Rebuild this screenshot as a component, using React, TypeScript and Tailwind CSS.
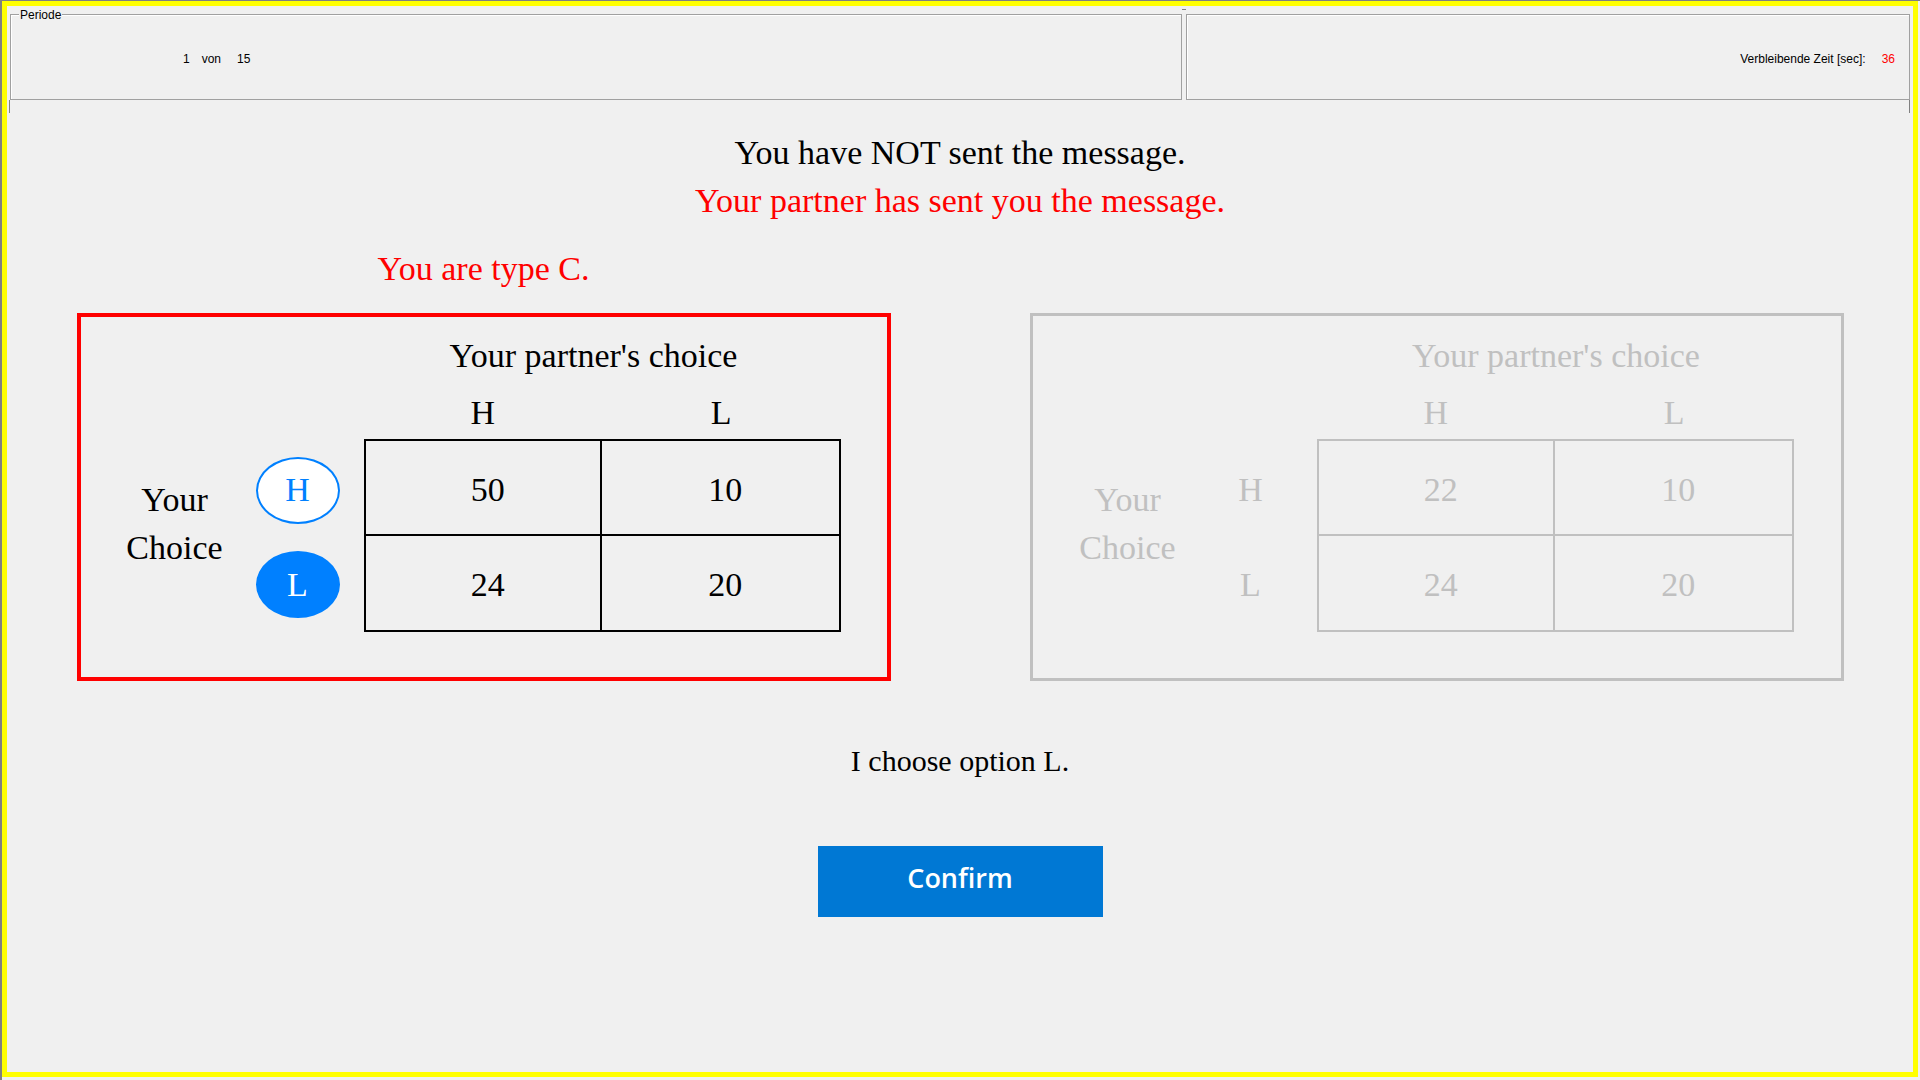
import React from 'react';

const serif = "font-['Liberation_Serif','Times_New_Roman',serif]";
const sans = "font-['Liberation_Sans',Arial,sans-serif]";

type CardProps = {
  active: boolean;
  cells: string[];
  choice?: 'H' | 'L';
};

const ChoiceBubble: React.FC<{ label: string; selected: boolean }> = ({ label, selected }) => (
  <div
    className={`w-[84px] h-[67px] rounded-[50%] border-2 border-[#0080ff] flex items-center justify-center leading-[48px] ${
      selected ? 'bg-[#0080ff] text-white' : 'bg-white text-[#0080ff]'
    }`}
  >
    {label}
  </div>
);

const PayoffCard: React.FC<CardProps> = ({ active, cells, choice }) => {
  const line = active ? 'border-black' : 'border-[#c0c0c0]';
  return (
    <div
      className={`w-[814px] h-[368px] ${
        active ? 'border-4 border-[#ff0000] text-black' : 'border-[3px] border-[#c0c0c0] text-[#c0c0c0] pt-px pl-px'
      }`}
    >
      {/* title */}
      <div className="mt-[15px] h-[48px] flex">
        <div className={`ml-[283px] w-[477px] text-center leading-[48px] ${active ? 'pr-[17px]' : 'pl-[2px]'}`}>
          Your partner's choice
        </div>
      </div>

      {/* column labels */}
      <div className="mt-[9px] ml-[283px] w-[477px] h-[48px] grid grid-cols-2 text-center leading-[48px]">
        <div>H</div>
        <div>L</div>
      </div>

      {/* body */}
      <div className="mt-[2px] flex pl-[30px]">
        <div className="w-[128px] mt-[37px] text-center leading-[48px]">
          <div>Your</div>
          <div>Choice</div>
        </div>
        <div className="w-[118px] h-[193px] pt-[4px] grid grid-rows-2">
          {(['H', 'L'] as const).map((r) => (
            <div key={r} className="flex items-center justify-center leading-[48px]">
              {active ? <ChoiceBubble label={r} selected={choice === r} /> : r}
            </div>
          ))}
        </div>
        <div className={`ml-[7px] w-[477px] h-[193px] border-2 ${line} grid grid-cols-2 grid-rows-2`}>
          {cells.map((c, i) => (
            <div
              key={i}
              className={`flex items-center justify-center pl-[10px] pt-[5px] leading-[48px] ${line} ${i % 2 === 0 ? 'border-r-2' : ''} ${
                i < 2 ? 'border-b-2' : ''
              }`}
            >
              {c}
            </div>
          ))}
        </div>
      </div>
    </div>
  );
};

export default function App() {
  return (
    <div className="w-[1920px] h-[1080px] bg-[#f0f0f0] border-t border-l-2 border-[#808080] pr-[2px] pb-[3px] overflow-hidden">
      <div className="w-full h-full border-[5px] border-[#ffff00] flex flex-col">
        {/* top info bar */}
        <div className={`flex mt-[8px] mx-[3px] ${sans} text-[12px] text-black`}>
          <div className="relative w-[1172px] h-[86px] border border-[#a0a0a0] shadow-[inset_1px_1px_0_#ffffff] flex items-center pt-[4px]">
            <span className="absolute left-[8px] top-[-7px] px-[1px] bg-[#f0f0f0] leading-[14px]">Periode</span>
            <span className="ml-[172px]">1</span>
            <span className="ml-[12px]">von</span>
            <span className="ml-[16px]">15</span>
          </div>
          <div className="w-[4px] flex flex-col">
            <div className="mt-[-5px] h-px bg-[#808080]" />
          </div>
          <div className="w-[724px] h-[86px] border border-[#a0a0a0] shadow-[inset_1px_1px_0_#ffffff] flex items-center justify-end pr-[14px] pt-[4px]">
            <span>Verbleibende Zeit [sec]:</span>
            <span className="ml-[16px] text-[#ff0000]">36</span>
          </div>
        </div>
        <div className="h-[13px] ml-[2px] mr-[3px] border-l border-r border-[#808080]" />

        {/* main */}
        <div className={`${serif} text-[34px] flex flex-col items-center`}>
          <p className="mt-[16px] leading-[48px] text-black">You have NOT sent the message.</p>
          <p className="leading-[48px] text-[#ff0000]">Your partner has sent you the message.</p>

          <div className="mt-[20px] flex gap-[139px]">
            <div className="w-[814px] text-center leading-[48px] text-[#ff0000]">You are type C.</div>
            <div className="w-[814px]" />
          </div>

          <div className="mt-[20px] flex gap-[139px]">
            <PayoffCard active cells={['50', '10', '24', '20']} choice="L" />
            <PayoffCard active={false} cells={['22', '10', '24', '20']} />
          </div>

          <p className="mt-[56px] text-[30px] leading-[48px] text-black">I choose option L.</p>

          <button className="mt-[61px] w-[285px] h-[71px] pb-[7px] bg-[#0078d4] text-white font-['Open_Sans',sans-serif] font-semibold text-[27px]">
            Confirm
          </button>
        </div>
      </div>
    </div>
  );
}
